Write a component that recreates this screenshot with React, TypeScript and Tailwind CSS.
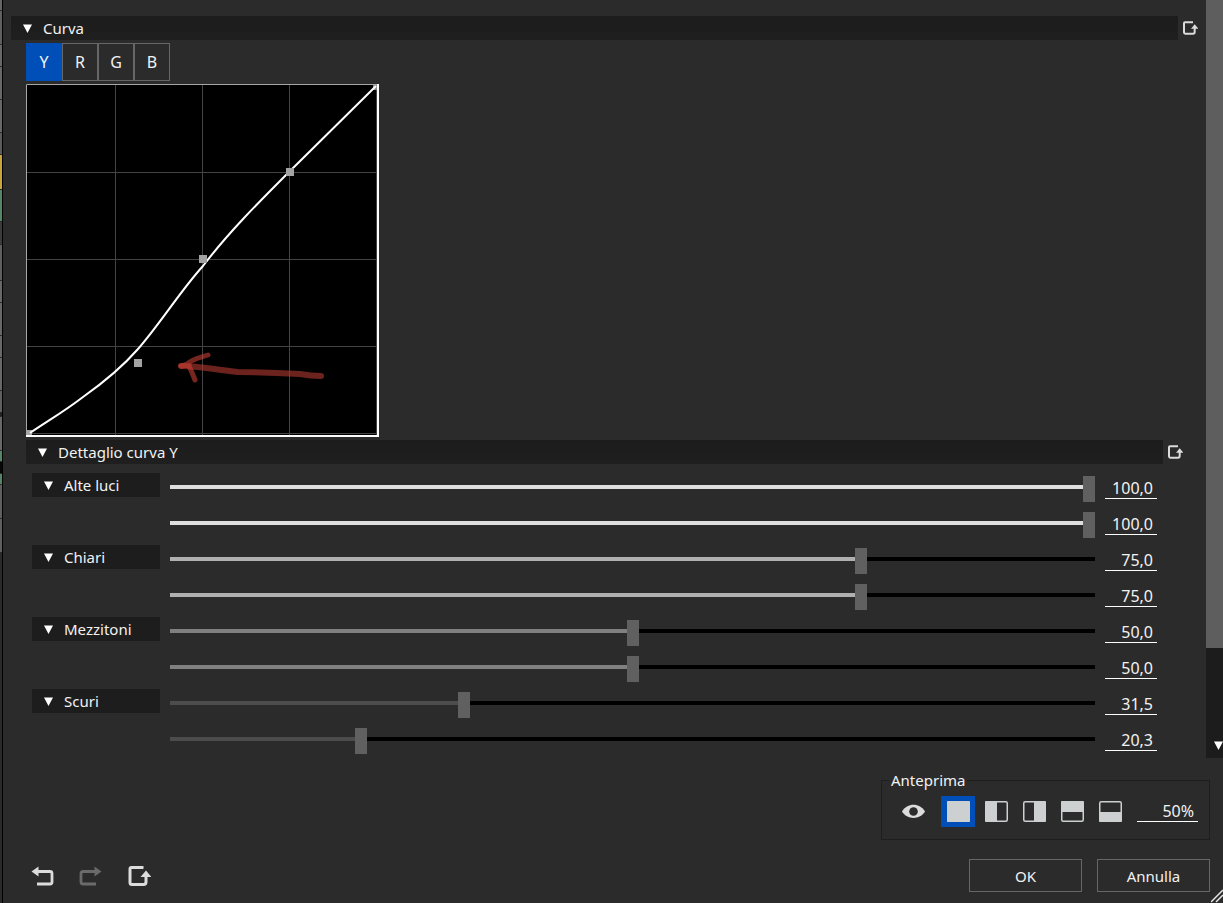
import { useState } from "react";
import clsx from "clsx";

type Channel = "Y" | "R" | "G" | "B";
type PreviewMode = "full" | "left" | "right" | "top" | "bottom";

const CHANNELS: Channel[] = ["Y", "R", "G", "B"];

const GROUPS = [
  { name: "Alte luci", fill: "#dfdfdf", input: 100, output: 100 },
  { name: "Chiari", fill: "#b0b0b0", input: 75, output: 75 },
  { name: "Mezzitoni", fill: "#808080", input: 50, output: 50 },
  { name: "Scuri", fill: "#4c4c4c", input: 31.5, output: 20.3 },
];

const PREVIEWS: { mode: PreviewMode; label: string; x: number; y: number; w: number; h: number }[] = [
  { mode: "full", label: "Intero", x: 0, y: 0, w: 23, h: 21 },
  { mode: "left", label: "Sinistra", x: 0, y: 0, w: 12, h: 21 },
  { mode: "right", label: "Destra", x: 11, y: 0, w: 12, h: 21 },
  { mode: "top", label: "Sopra", x: 0, y: 0, w: 23, h: 11 },
  { mode: "bottom", label: "Sotto", x: 0, y: 11, w: 23, h: 10 },
];

// timeline of the window behind, only its right edge is visible
const STRIP = [
  { h: 10, c: "#666666" }, { h: 33, c: "#606060" }, { h: 21, c: "#686868" },
  { h: 32, c: "#686868" }, { h: 32, c: "#686868" }, { h: 21, c: "#5c5c5c" },
  { h: 34, c: "#c9a63c" }, { h: 31, c: "#55866a" }, { h: 22, c: "#3c3c3c" },
  { h: 35, c: "#606060" }, { h: 21, c: "#686868" }, { h: 32, c: "#686868" },
  { h: 21, c: "#686868" }, { h: 32, c: "#686868" }, { h: 21, c: "#606060" },
  { h: 3, c: "#222222" }, { h: 33, c: "#686868" }, { h: 10, c: "#55866a" },
  { h: 11, c: "#050805" }, { h: 10, c: "#55866a" }, { h: 33, c: "#606060" },
  { h: 33, c: "#606060" },
];

function Triangle() {
  return (
    <svg width="9" height="9" viewBox="0 0 9 9" className="shrink-0">
      <path d="M0 0.5h9L4.5 9z" fill="#fff" />
    </svg>
  );
}

function ResetIcon({ size }: { size: number }) {
  return (
    <svg width={size} height={size} viewBox="0 0 24 24" fill="none">
      <path d="M16.5 3.5H4.5Q3 3.5 3 5V18.5Q3 20.5 5 20.5H16.5Q19 20.5 19 18V12" stroke="#dcdcdc" strokeWidth="3" />
      <path d="M19 6.5L24.5 13H13.5z" fill="#dcdcdc" />
    </svg>
  );
}

function SectionHeader({ title, open, onToggle }: { title: string; open: boolean; onToggle: () => void }) {
  return (
    <div className="flex items-center gap-1">
      <button
        onClick={onToggle}
        aria-expanded={open}
        className="flex h-6 flex-1 items-center gap-[11px] bg-gradient-to-b from-[#1c1c1c] to-[#1f1f1f] pl-3 text-left"
      >
        <Triangle />
        {title}
      </button>
      <button aria-label={`Ripristina ${title}`}>
        <ResetIcon size={16} />
      </button>
    </div>
  );
}

function CurveGraph() {
  const handles = [[111, 278], [176, 174], [263, 87]];
  return (
    <svg width="353" height="353" viewBox="0 0 353 353" className="block" role="img" aria-label="Curva">
      <rect width="353" height="353" fill="#000" />
      <path d="M89.5 1V351M176.5 1V351M263.5 1V351M350.5 1V351M1 88.5H351M1 175.5H351M1 262.5H351M1 349.5H351" stroke="#434343" />
      <path d="M0.5 353V0.5H353" fill="none" stroke="#a6a6a6" />
      <path d="M352 0V352H0" fill="none" stroke="#fff" strokeWidth="2" />
      <rect x="1" y="346" width="5" height="5" fill="#a6a6a6" />
      <rect x="347" y="1" width="4" height="5" fill="#8c8c8c" />
      <path
        d="M4 349C20 338 39 327 57 313C81 296 98 281 112 265C134 240 155 206 177 182C202 149 232 119 263 88L350 2"
        fill="none"
        stroke="#fff"
        strokeWidth="2"
      />
      {handles.map(([x, y]) => (
        <rect key={x} x={x - 3} y={y - 3} width="8" height="8" fill="#a3a3a3" />
      ))}
      {/* hand-drawn arrow */}
      <g fill="none" stroke="#b53a30" strokeLinecap="round" strokeLinejoin="round" strokeWidth="6" opacity="0.6">
        <path d="M155 282C174 282 190 286 212 288C240 288 258 289 274 290C285 292 290 292 295 292" />
      </g>
      <g fill="none" stroke="#d8443a" strokeLinecap="round" strokeLinejoin="round" strokeWidth="5" opacity="0.55">
        <path d="M182 271C173 274 166 275 161 280L155 282L162 281C165 285 167 291 169 296" />
        <path d="M155 282L163 281" />
      </g>
    </svg>
  );
}

const rangeClass =
  "block h-7 min-w-0 flex-1 cursor-pointer appearance-none bg-transparent outline-none " +
  "[&::-webkit-slider-runnable-track]:h-1 [&::-webkit-slider-runnable-track]:bg-[image:var(--track)] " +
  "[&::-webkit-slider-thumb]:-mt-[9px] [&::-webkit-slider-thumb]:h-[26px] [&::-webkit-slider-thumb]:w-3 " +
  "[&::-webkit-slider-thumb]:appearance-none [&::-webkit-slider-thumb]:bg-[#606060]";

function SliderRow({ label, fill, initial }: { label: string; fill: string; initial: number }) {
  const [value, setValue] = useState(initial);
  const track = `linear-gradient(to right, ${fill} ${value}%, #000 ${value}%)`;

  return (
    <div className="flex h-9 flex-1 items-start gap-[10px]">
      <input
        type="range"
        min={0}
        max={100}
        step={0.1}
        value={value}
        onChange={e => setValue(Number(e.target.value))}
        aria-label={label}
        className={rangeClass}
        style={{ "--track": track } as React.CSSProperties}
      />
      <input
        type="text"
        readOnly
        value={value.toFixed(1).replace(".", ",")}
        aria-label={`${label} valore`}
        className="mt-[5px] h-[21px] w-[52px] border-b border-white bg-transparent pr-1 text-right text-base outline-none"
      />
    </div>
  );
}

function PreviewBox() {
  const [mode, setMode] = useState<PreviewMode>("full");
  return (
    <fieldset className="mt-[10px] border border-[#1e1e1e] pr-[11px] pb-3 pl-[14px]">
      <legend className="-ml-[7px] px-[2px] leading-6">Anteprima</legend>
      <div className="flex items-center gap-1 pt-1">
        <button aria-label="Mostra anteprima" className="mr-[7px] flex h-[31px] w-[34px] items-center justify-center">
          <svg width="23" height="15" viewBox="0 0 23 15">
            <path d="M0 7.5C5 -1.5 18 -1.5 23 7.5C18 16 5 16 0 7.5z" fill="#dcdcdc" />
            <circle cx="11.5" cy="7.5" r="4.3" fill="#2b2b2b" />
          </svg>
        </button>
        {PREVIEWS.map(p => (
          <button
            key={p.mode}
            aria-label={p.label}
            aria-pressed={mode === p.mode}
            onClick={() => setMode(p.mode)}
            className={clsx("flex h-[31px] w-[34px] items-center justify-center", mode === p.mode && "bg-[#004fb8]")}
          >
            <svg width="23" height="21" viewBox="0 0 23 21">
              <rect x="0.75" y="0.75" width="21.5" height="19.5" rx="1.5" fill="none" stroke="#cdd0d1" strokeWidth="1.5" />
              <rect x={p.x} y={p.y} width={p.w} height={p.h} rx="1" fill="#cdd0d1" />
            </svg>
          </button>
        ))}
        <input
          type="text"
          defaultValue="50%"
          aria-label="Dimensione anteprima"
          className="ml-[6px] h-[21px] w-[61px] border-b border-white bg-transparent pr-1 text-right text-base outline-none"
        />
      </div>
    </fieldset>
  );
}

export default function App() {
  const [channel, setChannel] = useState<Channel>("Y");
  const [curveOpen, setCurveOpen] = useState(true);
  const [detailOpen, setDetailOpen] = useState(true);

  return (
    <div className="flex h-screen overflow-hidden bg-[#2b2b2b] font-['Noto_Sans','Open_Sans',sans-serif] text-[15px] leading-5 text-[#f2f2f2]">
      <div className="flex w-[3px] shrink-0 flex-col gap-px border-r border-black bg-[#2a2a2a]" aria-hidden="true">
        {STRIP.map((s, i) => (
          <div key={i} style={{ height: s.h, background: s.c }} />
        ))}
      </div>

      <div className="flex min-w-0 flex-1 flex-col">
        <div className="flex min-h-0 flex-1">
          <main className="min-w-0 flex-1 overflow-hidden pt-4 pr-2 pl-2">
            <SectionHeader title="Curva" open={curveOpen} onToggle={() => setCurveOpen(!curveOpen)} />
            {curveOpen && (
              <div className="pt-[3px] pr-[15px] pl-[15px]">
                <div className="mb-[3px] flex">
                  {CHANNELS.map(c => (
                    <button
                      key={c}
                      onClick={() => setChannel(c)}
                      className={clsx(
                        "h-[38px] w-9 border text-base",
                        channel === c ? "border-[#004fb8] bg-[#004fb8]" : "border-[#666]"
                      )}
                    >
                      {c}
                    </button>
                  ))}
                </div>
                <CurveGraph />
                <div className="pt-[3px]">
                  <SectionHeader title={`Dettaglio curva ${channel}`} open={detailOpen} onToggle={() => setDetailOpen(!detailOpen)} />
                </div>
                {detailOpen && (
                  <div className="pt-[9px] pr-[26px] pl-[6px]">
                    {GROUPS.map(g => (
                      <div key={g.name} className="flex gap-[10px]">
                        <button className="flex h-6 w-32 shrink-0 items-center gap-[11px] bg-[#1d1d1d] pl-3 text-left">
                          <Triangle />
                          {g.name}
                        </button>
                        <div className="min-w-0 flex-1">
                          <SliderRow label={`${g.name} ingresso`} fill={g.fill} initial={g.input} />
                          <SliderRow label={`${g.name} uscita`} fill={g.fill} initial={g.output} />
                        </div>
                      </div>
                    ))}
                  </div>
                )}
              </div>
            )}
          </main>

          <div className="flex w-[17px] shrink-0 flex-col overflow-hidden bg-[#1c1c1c]">
            <div className="flex-1 bg-[#5e5e5e]" />
            <div className="flex h-[110px] items-end pb-2 pl-2">
              <Triangle />
            </div>
          </div>
        </div>

        <footer className="shrink-0 pr-[13px] pl-6">
          <div className="flex justify-end">
            <PreviewBox />
          </div>
          <div className="flex items-center justify-between pt-[19px] pb-[11px]">
            <div className="flex gap-4">
              <button aria-label="Annulla modifica" className="flex size-8 items-center justify-center">
                <svg width="24" height="24" viewBox="0 0 24 24" fill="none">
                  <path d="M6 7.5H19Q21 7.5 21 9.5V18Q21 20 19 20H6" stroke="#dcdcdc" strokeWidth="2.8" />
                  <path d="M0.5 7.5L7.5 2.5V12.5z" fill="#dcdcdc" />
                </svg>
              </button>
              <button aria-label="Ripeti modifica" className="flex size-8 items-center justify-center">
                <svg width="24" height="24" viewBox="0 0 24 24" fill="none">
                  <path d="M17 7.5H4Q2 7.5 2 9.5V18Q2 20 4 20H17" stroke="#6a6a6a" strokeWidth="2.8" />
                  <path d="M22.5 7.5L15.5 2.5V12.5z" fill="#6a6a6a" />
                </svg>
              </button>
              <button aria-label="Ripristina tutto" className="flex size-8 items-center justify-center">
                <ResetIcon size={24} />
              </button>
            </div>
            <div className="flex gap-[15px]">
              <button className="h-[33px] w-[113px] border border-[#666]">OK</button>
              <button className="h-[33px] w-[113px] border border-[#666]">Annulla</button>
            </div>
          </div>
        </footer>
      </div>

      {/* resize grip */}
      <svg width="12" height="14" viewBox="0 0 12 14" className="fixed right-0 bottom-0">
        <path d="M0 13L12 1M5 13L12 6" stroke="#e6e6e6" strokeWidth="1.5" />
      </svg>
    </div>
  );
}
